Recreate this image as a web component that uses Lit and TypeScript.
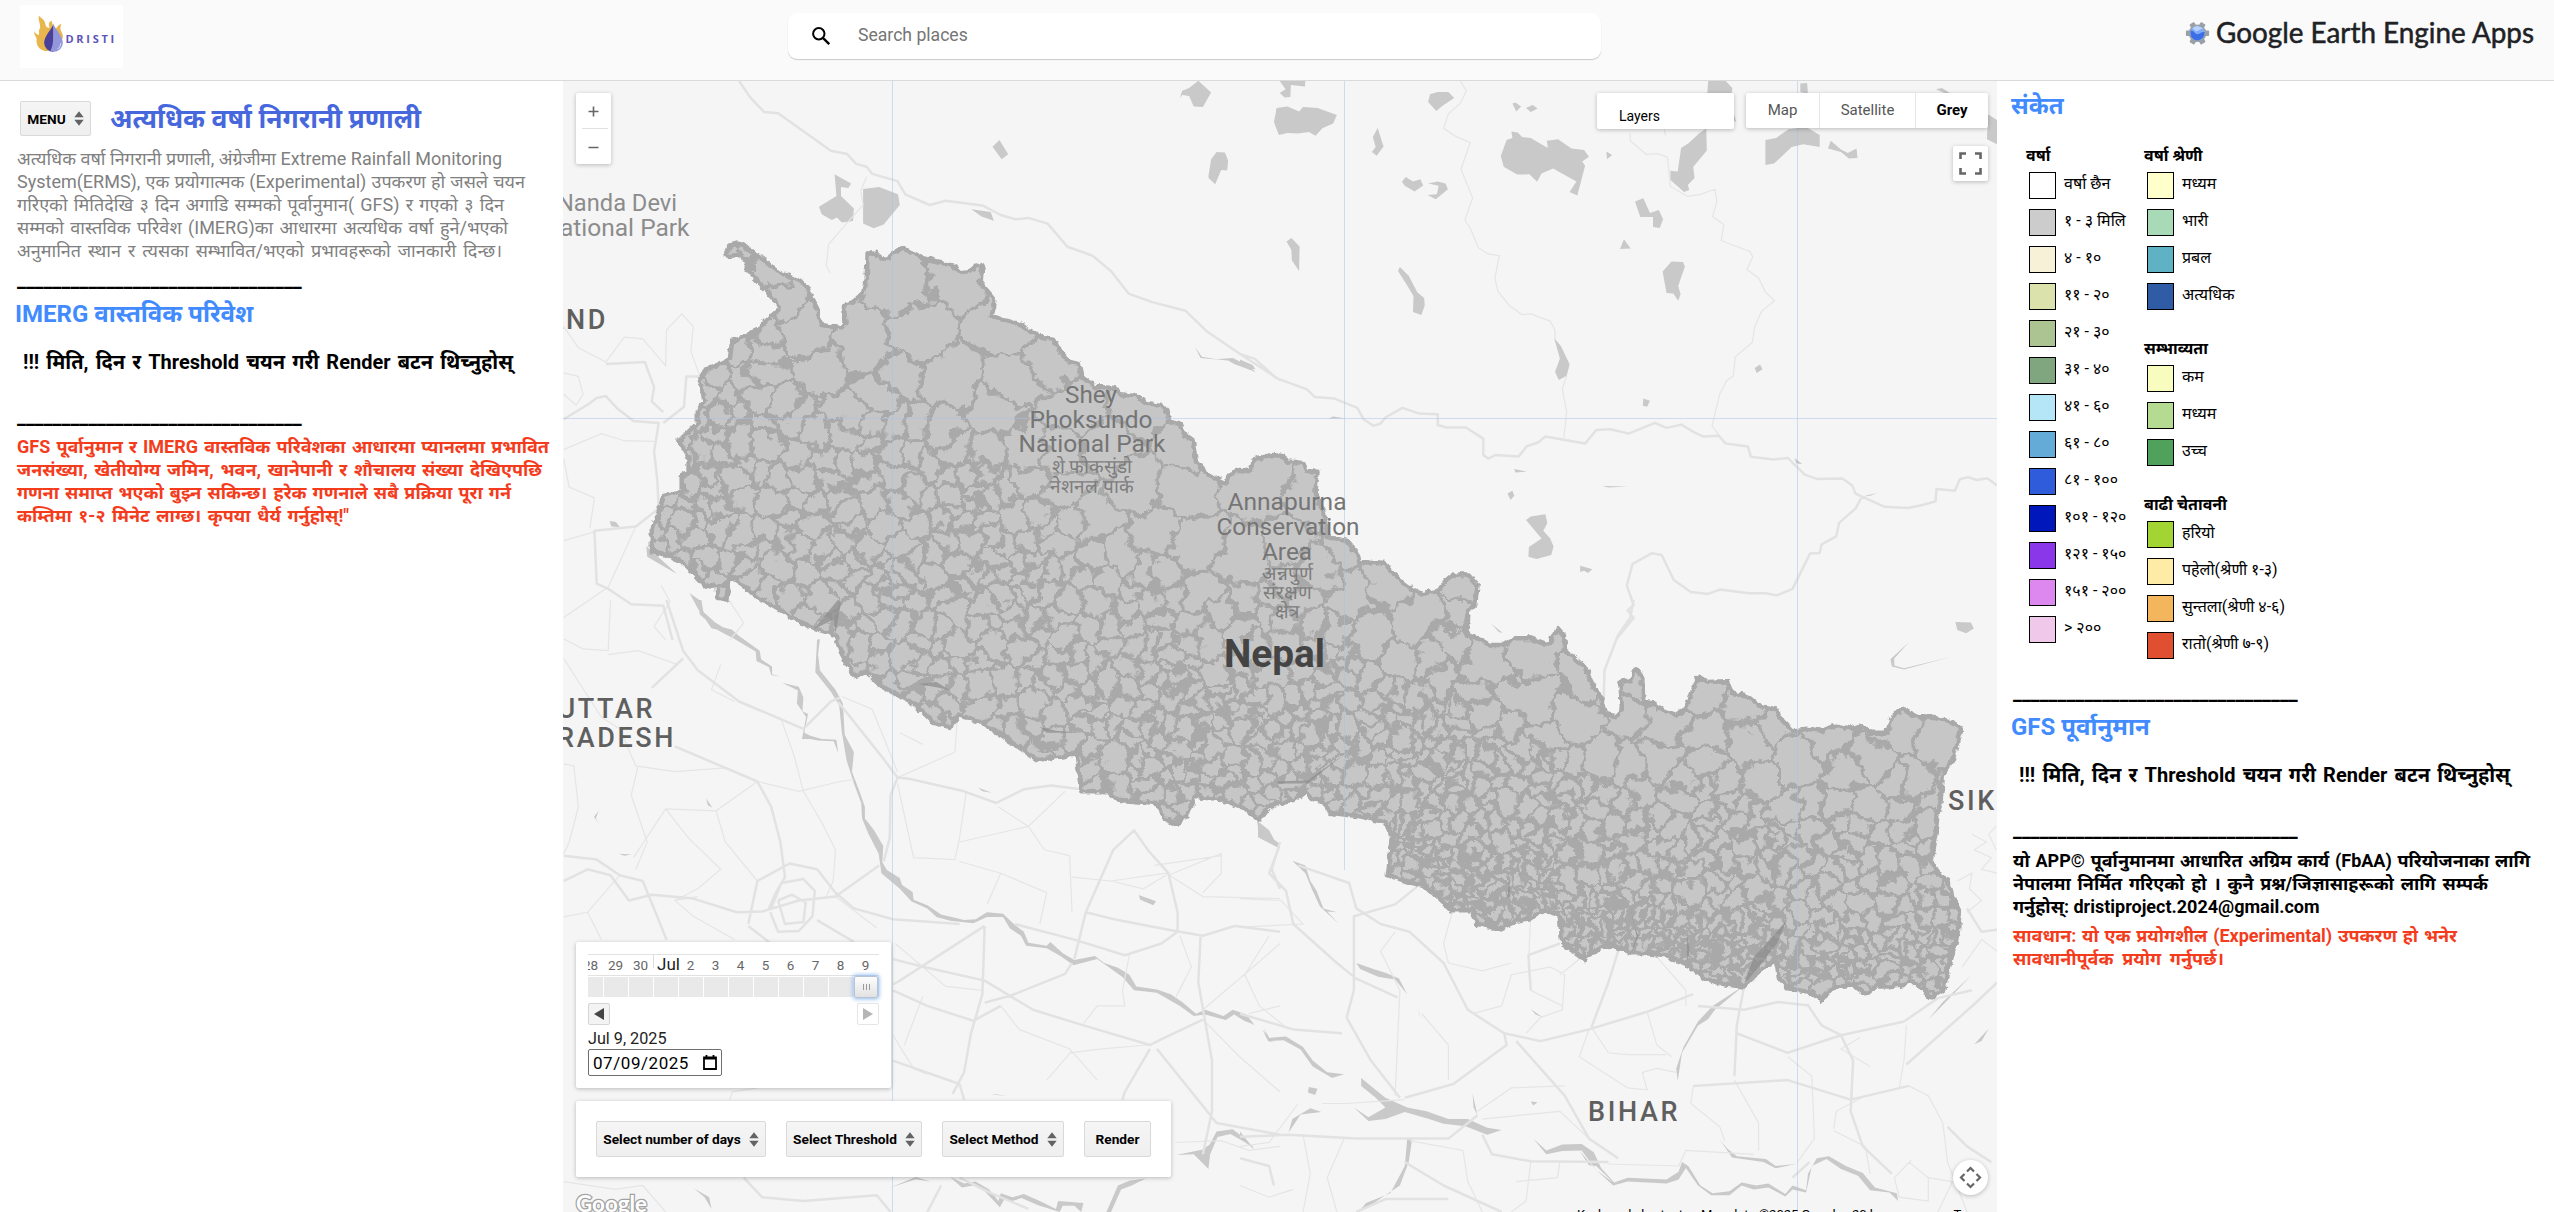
import { LitElement, html, svg, css } from "lit";
import { customElement, property } from "lit/decorators.js";

type Pt = [number, number];

/* Survey sheets: each one has an origin and a scale into map units. */
const SHEETS: Record<string, [number, number, number, number]> = {
  nw: [560, 80, 2.1778, 2.8],
  ne: [1240, 80, 2.0632, 2.8],
  sw: [560, 600, 2.1778, 2.562],
  se: [1240, 600, 2.0632, 2.562],
};

function pts(sheet: string, s: string): Pt[] {
  const [ox, oy, sx, sy] = SHEETS[sheet];
  return s
    .trim()
    .split(/\s+/)
    .map((p) => {
      const [x, y] = p.split(",").map(Number);
      return [ox + x / sx, oy + y / sy] as Pt;
    });
}

const toPath = (p: Pt[], close = false) =>
  "M" + p.map(([x, y]) => `${x.toFixed(1)},${y.toFixed(1)}`).join("L") + (close ? "Z" : "");

const BORDER: Pt[] = [
  ...pts("nw", `360,485 370,464 385,458 398,462 415,480 430,490 445,505 460,522 480,540 500,550 525,565 540,585 548,610 560,640 568,685 595,692 612,695 622,680 618,630 640,620 660,595 668,560 670,485 690,487 700,500 715,500 722,485 748,472 770,485 790,498 830,510 850,520 862,525 875,540 900,530 905,517 920,525 915,570 935,600 948,620 940,660 965,672 1000,685 1050,720 1075,725 1090,760 1110,790 1130,795 1135,830 1165,860 1210,862 1220,880 1250,885 1280,905 1310,910 1325,935 1325,955 1350,965 1365,1000 1378,1010 1385,1070 1410,1105 1450,1130 1458,1105 1475,1095 1500,1095`),
  ...pts("ne", `30,1062 65,1050 85,1052 100,1068 130,1072 138,1095 160,1098 155,1160 170,1200 178,1240 180,1280 220,1290 238,1320 248,1350 300,1355 325,1395 350,1420 375,1440 410,1430 425,1400 440,1385 470,1385 490,1415 485,1470 470,1490 465,1540`),
  ...pts("se", `470,90 490,97 515,115 545,115 565,98 600,98 628,112 640,110 655,72 668,90 672,130 710,170 725,210 745,250 752,290 775,298 788,280 785,210 805,205 817,175 830,200 832,260 855,265 870,280 900,295 920,280 930,240 945,200 965,210 1005,208 1015,240 1050,248 1075,272 1105,280 1120,310 1140,335 1170,330 1200,335 1230,322 1260,330 1280,320 1300,340 1335,340 1345,300 1365,280 1400,300 1430,302 1465,310 1488,330 1482,360 1470,410 1450,450 1445,520 1440,540 1435,600 1425,665 1440,700 1460,720 1470,760 1485,800 1480,860 1465,930 1450,1000 1425,1020 1405,995 1385,975 1365,985 1340,990 1310,990 1290,1010 1265,985 1240,990 1215,1000 1200,1025 1180,1005 1130,995 1112,970 1105,920 1085,940 1060,965 1040,990 1000,985 960,970 930,940 910,930 880,910 840,905 810,905 770,885 745,890 710,920 690,900 665,880 660,810 630,795 600,815 575,820 535,842 490,830 480,795 435,795 410,765 380,730 355,725 305,705 310,660 315,610 300,570 250,555 185,545 170,515 150,510 135,490 110,515 80,520 60,530 40,562`),
  ...pts("sw", `1500,540 1440,510 1380,505 1370,545 1345,575 1320,565 1300,520 1215,512 1195,490 1135,490 1125,395 1040,410 990,370 960,345 910,310 870,295 850,325 815,315 770,265 730,240 700,220 670,185 640,195 610,130 600,90 535,65 500,40 450,5`),
  ...pts("nw", `430,1450 400,1415 370,1390 362,1455 345,1450 340,1420 315,1415 290,1380 260,1345 220,1325 200,1320 200,1260 215,1210 225,1165 265,1150 265,1110 280,1100 280,1060 260,1010 300,960 300,925 315,900 305,840 320,810 370,780 375,730 395,722 435,700 445,680 478,640 455,595 410,535 395,490 370,492`),
];

function makeRandom(seed: number) {
  return () => {
    seed = (seed * 1664525 + 1013904223) >>> 0;
    return seed / 4294967296;
  };
}

/* Top and bottom of the country at a longitude. */
function span(x: number): Pt | null {
  let lo = Infinity;
  let hi = -Infinity;
  for (let i = 0; i < BORDER.length; i++) {
    const a = BORDER[i];
    const b = BORDER[(i + 1) % BORDER.length];
    if (a[0] <= x !== b[0] <= x) {
      const y = a[1] + ((x - a[0]) / (b[0] - a[0])) * (b[1] - a[1]);
      lo = Math.min(lo, y);
      hi = Math.max(hi, y);
    }
  }
  return hi > lo ? [lo, hi] : null;
}

/* Municipalities are large in the Himalaya and small in the Terai. */
function cellSize(x: number, y: number, lo: number, hi: number): number {
  const t = (y - lo) / (hi - lo);
  const d = y - lo;
  if (x > 1380 && hi - y < 62) return x > 1780 ? 10.5 : 8;
  if (x < 1330) {
    if (d < 75 && x > 780) return 60;
    if (t < 0.34) return x > 780 ? 40 : 24;
    if (t < 0.5) return 21;
    if (x > 1130 && t > 0.62) return 14;
    return 18.5;
  }
  if (d < 65) return 42;
  if (d < 100) return 26;
  return x < 1560 ? 14 : 17.5;
}

function municipalities(): string {
  const rnd = makeRandom(77);
  const seeds: { x: number; y: number; r: number }[] = [];
  for (let i = 0; i < 22000; i++) {
    const x = 640 + rnd() * 1330;
    const s = span(x);
    if (!s) continue;
    const y = s[0] + rnd() * (s[1] - s[0]);
    const r = cellSize(x, y, s[0], s[1]) * (0.62 + 0.8 * rnd());
    let ok = true;
    for (const o of seeds) {
      const q = Math.max(r * 0.9, o.r * 0.85);
      if ((o.x - x) ** 2 + (o.y - y) ** 2 < q * q) {
        ok = false;
        break;
      }
    }
    if (ok) seeds.push({ x, y, r });
  }
  let d = "";
  for (const a of seeds) {
    const reach = 95;
    let poly: Pt[] = [[a.x - reach, a.y - reach], [a.x + reach, a.y - reach], [a.x + reach, a.y + reach], [a.x - reach, a.y + reach]];
    for (const b of seeds) {
      if (a === b || Math.abs(a.x - b.x) > 190 || Math.abs(a.y - b.y) > 190) continue;
      const nx = b.x - a.x;
      const ny = b.y - a.y;
      const c = (b.x ** 2 + b.y ** 2 - a.x ** 2 - a.y ** 2) / 2;
      const side = (p: Pt) => p[0] * nx + p[1] * ny - c;
      const next: Pt[] = [];
      for (let i = 0; i < poly.length; i++) {
        const p = poly[i];
        const q = poly[(i + 1) % poly.length];
        const sp = side(p);
        const sq = side(q);
        if (sp <= 0) next.push(p);
        if (sp <= 0 !== sq <= 0) {
          const k = sp / (sp - sq);
          next.push([p[0] + (q[0] - p[0]) * k, p[1] + (q[1] - p[1]) * k]);
        }
      }
      poly = next;
      if (!poly.length) break;
    }
    if (poly.length > 2) d += toPath(poly, true);
  }
  return d;
}

const BORDER_PATH = toPath(BORDER, true);
const CELLS_PATH = municipalities();

const join = (list: [string, string][], close = false) => list.map(([s, p]) => toPath(pts(s, p), close)).join("");

const WATER = join(
  [
    ["nw", "1350,50 1355,30 1370,22 1390,2 1418,35 1400,76 1380,74 1370,45 1355,42"],
    ["nw", "1560,80 1568,80 1568,150 1556,120"],
    ["nw", "942,187 957,168 976,208 962,222"],
    ["nw", "1412,270 1418,222 1430,202 1448,203 1455,225 1453,253 1440,252 1427,292 1413,275"],
    ["nw", "598,264 634,290 628,302 612,300 612,325 640,360 638,395 614,399 603,385 592,392 570,376 564,355 602,325"],
    ["nw", "660,305 695,300 736,320 740,350 705,405 683,415 660,402"],
    ["nw", "896,362 938,370 945,394 918,382"],
    ["nw", "1383,748 1398,775 1430,782 1465,778 1500,800 1515,818 1468,795 1455,785 1395,778"],
    ["nw", "188,1305 255,1383 230,1365 190,1335"],
    ["nw", "108,1235 122,1238 130,1252 112,1250"],
    ["nw", "282,1436 302,1455 315,1495 350,1532 352,1542 330,1535 300,1480"],
    ["nw", "368,1538 400,1568 385,1568"],
    ["ne", "82,3 135,3 134,18 105,14 104,48 92,49 82,36 94,26"],
    ["ne", "76,78 98,74 122,88 130,76 160,78 200,98 192,122 170,135 156,156 142,146 120,150 98,148 80,154 70,118"],
    ["ne", "388,62 392,40 408,34 430,34 442,50 418,72 405,87"],
    ["ne", "562,66 568,63 580,74 570,88"],
    ["ne", "590,78 604,70 614,80 600,90"],
    ["ne", "274,160 284,134 296,186 282,212 272,202 280,188"],
    ["ne", "96,452 106,442 123,466 122,535 107,505 106,476"],
    ["ne", "334,285 342,272 357,284 372,278 378,295 360,312 340,296"],
    ["ne", "388,290 408,284 424,290 429,306 404,334 387,322 406,320 410,296"],
    ["ne", "326,535 330,524 348,548 366,595 380,610 381,632 374,658 357,650 358,605 345,575"],
    ["ne", "560,144 573,147 582,160 600,162 635,190 633,170 656,166 684,192 710,196 720,215 706,228 712,240 696,323 680,314 694,284 646,248 622,262 613,285 597,264 572,265 544,243 538,213 550,168 562,162"],
    ["ne", "756,200 768,210 757,222"],
    ["ne", "966,3 1002,3 1016,22 1012,60 1024,118 1000,100 964,40"],
    ["ne", "926,176 948,148 962,136 963,197 935,244 938,274 924,294 927,308 916,314 888,280 888,254 903,256 910,190"],
    ["ne", "815,340 832,331 846,372 864,364 873,390 866,414 852,412 852,384 826,384"],
    ["ne", "792,446 806,472 784,473"],
    ["ne", "890,508 914,510 918,522 904,577 909,600 904,618 894,598 880,596 872,536"],
    ["ne", "1156,10 1170,8 1172,40 1156,34"],
    ["ne", "1436,26 1448,22 1465,36 1455,38"],
    ["ne", "1084,168 1106,162 1132,138 1168,132 1196,154 1196,188 1162,180 1138,188 1102,234 1084,238"],
    ["ne", "1213,192 1219,170 1240,195 1254,204 1272,192 1274,218 1256,220 1240,202"],
    ["ne", "1543,96 1562,112 1562,180 1541,166"],
    ["ne", "648,722 662,745 680,796 674,828 658,840 650,818 660,780"],
    ["ne", "832,892 846,898 840,915 831,912"],
    ["ne", "1062,806 1073,797 1078,810 1066,820"],
    ["ne", "182,948 192,942 216,947"],
    ["ne", "566,1089 592,1097 568,1099"],
    ["ne", "552,1158 562,1150 566,1164 558,1176"],
    ["ne", "748,1137 800,1138 760,1141"],
    ["ne", "590,1232 600,1222 630,1216 634,1240 626,1262 640,1284 647,1306 642,1330 612,1341 595,1335 596,1308 622,1284"],
    ["ne", "702,1360 727,1370 718,1380 710,1374 702,1378"],
    ["ne", "1144,1058 1160,1075 1148,1074"],
    ["ne", "1284,1166 1315,1156 1300,1164"],
    ["ne", "1476,1518 1508,1519 1514,1536 1498,1549 1480,1540"],
    ["ne", "0,783 26,798 32,810 12,806 0,800"],
    ["ne", "518,1522 542,1548 534,1546"],
    ["se", "1342,152 1380,108 1350,150 1350,168 1370,175 1470,145 1370,178 1345,170"],
    ["sw", "298,0 308,0 312,30 338,58 355,70 375,76 390,92 435,130 438,152 462,170 462,190 480,196 460,192 455,172 428,156 426,132 380,100 345,78 305,38"],
    ["sw", "484,212 520,222 530,250 528,285 540,292 532,340 545,348 570,356 602,358 606,392 596,362 562,360 545,356 527,356 536,300 516,265 518,232"],
    ["sw", "560,102 566,100 562,140 566,180 600,230 616,265 620,345 640,390 636,440 652,490 664,530 664,560 684,590 704,630 702,672 712,692 740,712 745,730 768,748 770,768 800,782 830,806 880,820 905,818 930,800 965,804 990,832 1010,850 1020,878 1060,886 1068,876 1095,905 1120,922 1165,912 1185,930 1215,942 1240,960 1255,990 1300,998 1330,1010 1355,1030 1385,1060 1405,1050 1445,1066 1465,1050 1495,1062 1512,1088 1490,1078 1468,1062 1450,1076 1405,1062 1380,1066 1350,1040 1300,1006 1250,1000 1225,966 1170,920 1118,936 1090,912 1060,892 1015,886 1004,860 980,842 965,812 930,812 900,828 850,822 820,812 800,790 765,772 740,740 700,700 694,650 672,600 658,560 656,520 640,470 624,410 614,340 608,270 590,235 556,185"],
    ["sw", "910,480 940,494 920,490"],
    ["sw", "318,508 332,532 322,526"],
    ["sw", "84,540 78,560 86,575 74,556"],
    ["sw", "128,650 156,652 140,655"],
    ["sw", "1260,756 1298,772 1292,782 1264,768"],
    ["sw", "1520,560 1528,590 1568,625 1568,635 1520,608"],
    ["sw", "938,1265 975,1270 950,1268"],
    ["sw", "1532,1095 1545,1122 1568,1128 1545,1132"],
    ["sw", "1342,1422 1400,1408 1415,1395 1430,1362 1465,1356 1490,1378 1510,1402 1485,1385 1460,1368 1432,1376 1416,1420 1412,1458 1380,1420"],
    ["sw", "850,1478 880,1495 905,1490 935,1510 955,1540 960,1520 985,1530 1010,1522 1045,1540 1080,1560 1085,1540 1140,1545 1135,1568 1120,1552 1095,1552 1088,1568 1040,1550 1005,1532 985,1540 968,1535 958,1556 925,1515 900,1500 875,1505"],
    ["sw", "1190,1568 1215,1500 1240,1488 1275,1482 1245,1500 1222,1510 1200,1568"],
    ["sw", "718,1506 775,1478 806,1490 775,1484"],
    ["sw", "292,1508 325,1530 330,1560 315,1530"],
    ["se", "35,565 60,590 80,635 40,610"],
    ["se", "108,668 135,680 145,720 158,745 172,790 200,800 180,798 204,830 165,785 148,740 135,700"],
    ["se", "240,930 275,945 300,955 328,970 345,1010 320,972 285,965 248,945"],
    ["se", "0,1056 28,1088 0,1070"],
    ["se", "46,1100 60,1122 95,1118 130,1145 150,1180 180,1210 215,1215 190,1225 150,1195 125,1152 90,1128 58,1130"],
    ["se", "250,1225 275,1250 300,1275 345,1300 385,1310 430,1330 470,1330 510,1352 540,1358 510,1370 465,1348 420,1342 390,1330 340,1312 300,1330 265,1335 235,1300 265,1325 300,1300 280,1275 250,1245"],
    ["se", "605,1380 632,1410 665,1395 705,1394 730,1415 745,1455 772,1492 800,1480 880,1485 905,1465 912,1440 925,1450 950,1500 975,1520 1010,1515 1035,1492 1065,1500 1090,1495 1125,1522 1140,1500 1168,1512 1172,1470 1190,1430 1215,1425 1250,1450 1285,1468 1310,1505 1355,1520 1358,1540 1340,1518 1300,1512 1275,1475 1240,1458 1210,1432 1180,1450 1168,1518 1140,1510 1125,1528 1090,1505 1060,1510 1035,1500 1010,1525 972,1525 945,1500 920,1455 905,1485 880,1495 800,1490 770,1500 735,1460 705,1410 665,1412 632,1420"],
    ["se", "700,1410 735,1460 770,1492 735,1450 720,1448"],
    ["se", "990,1382 1005,1405 1025,1425 1085,1432 1105,1450 1148,1445 1105,1456 1080,1440 1015,1428"],
    ["se", "345,1380 355,1382 348,1440 330,1500 270,1550 245,1568 260,1545 310,1520 340,1450"],
    ["se", "1040,988 975,1040 945,1080 915,1145 900,1200 903,1232 912,1160 945,1090 965,1075 980,1050"],
    ["se", "100,1365 108,1330 145,1302 168,1312 125,1318"],
    ["se", "142,1248 160,1252 155,1268 140,1262"],
    ["se", "600,1285 614,1287 605,1295"],
    ["se", "600,1048 625,1070 610,1062"],
    ["se", "1420,1075 1450,1030 1510,960 1452,1035"],
    ["se", "1515,1138 1545,1098 1530,1130"],
    ["se", "0,1362 30,1408 0,1380"],
    ["se", "368,1045 373,1075 370,1060"],
    ["se", "480,1265 490,1320 482,1300"],
  ],
  true,
);

const INLAND_WATER = join(
  [
    ["sw", "552,75 605,0 612,8 600,85 596,50"],
    ["sw", "780,215 820,210 850,232 825,225"],
    ["sw", "1045,325 1080,335 1140,340 1060,340"],
    ["se", "75,465 140,462 215,395 175,435 140,470 80,470"],
    ["se", "1040,985 1060,915 1100,860 1128,820 1108,880 1070,940"],
    ["se", "805,780 812,830 822,860 808,905 818,862"],
    ["se", "555,712 558,760 552,765"],
    ["se", "922,855 928,900 922,925"],
  ],
  true,
);

const MAJOR_ROADS = join([
  ["nw", "390,3 415,50 445,90 475,93 590,198 625,207 645,235 668,243 680,263 735,283 752,320 805,350 840,338 920,351 960,378 992,390 1020,386 1062,402 1105,467 1160,492 1200,535 1238,598 1290,622 1362,646 1410,705 1490,775 1568,840"],
  ["ne", "0,768 30,780 75,835 138,866 155,888 195,892 242,918 255,950 275,968 290,962 300,945 335,918 370,934 408,936 408,966 425,973 466,973 502,1004 502,1050 512,1060 527,1050 575,1054 592,1025 615,1015 630,998 712,1018 735,980 765,978 802,990 856,960 880,974 911,965 935,985 955,998 988,996 1002,1018 1048,1026 1054,1055 1100,1063 1130,1058 1165,1105 1190,1117 1243,1116 1263,1135 1270,1158 1330,1195 1378,1198 1408,1190 1435,1180 1437,1145 1475,1150 1485,1118 1502,1112 1520,1120 1542,1115 1562,1135"],
  ["ne", "775,1568 812,1506 800,1485 812,1470 798,1415 810,1355 850,1325 870,1330 895,1400 930,1434 966,1439 990,1427 1050,1437 1085,1437 1107,1443 1140,1425 1176,1326 1196,1324 1200,1300 1230,1278 1236,1240 1270,1200 1284,1165"],
  ["se", "812,0 805,45 780,90 752,180 750,270"],
  ["nw", "8,950 65,905 80,890 100,885 125,920 160,955 215,960 205,1040 212,1120 215,1200 165,1250 75,1262 80,1410 105,1425 155,1468 225,1472 245,1568"],
  ["nw", "100,795 185,790 205,860 200,900 225,930"],
  ["nw", "225,960 270,915 275,830 305,830"],
  ["sw", "232,0 268,130 300,180 390,260 530,330 590,260 610,250"],
  ["sw", "268,150 200,225"],
  ["sw", "8,720 60,690 110,705 150,770 200,755 290,765 385,800 440,798 520,770 600,760 695,680"],
  ["sw", "8,655 80,665 130,705 180,720 215,820 232,870"],
  ["sw", "250,375 350,425 430,465 460,530 480,620 490,710 470,750 455,790"],
  ["sw", "410,830 430,720 500,675 560,690 600,750 640,790 725,818 870,830"],
  ["sw", "460,790 482,725 530,715 555,745 550,810 520,848 475,850 458,800"],
  ["sw", "475,770 505,755 535,775 530,825 490,830 475,770"],
  ["sw", "410,835 470,890"],
  ["sw", "560,820 640,876"],
  ["sw", "735,455 720,500 718,610 705,670"],
  ["sw", "735,455 760,458 880,490 950,520 1010,485 1070,475 1135,485"],
  ["sw", "605,260 700,400 735,455"],
  ["sw", "925,835 740,975 725,985"],
  ["sw", "925,835 920,1010 895,1110 880,1210 855,1265"],
  ["sw", "925,1032 985,1012 1100,958 1115,930"],
  ["sw", "725,1000 800,1040 900,1078 960,1040"],
  ["sw", "725,920 800,942 925,975 1030,1050 1140,1090 1285,1140 1310,1125 1400,1075"],
  ["sw", "990,830 1120,870 1230,910 1310,880 1345,850"],
  ["sw", "1145,800 1215,820 1325,845 1400,860 1470,835 1568,850"],
  ["sw", "1145,800 1120,920"],
  ["sw", "1145,800 1205,640 1250,590 1280,640 1325,700 1345,800 1345,850"],
  ["sw", "1395,860 1390,980 1420,1180 1420,1310 1400,1420"],
  ["sw", "1285,1150 1230,1260 1225,1280"],
  ["sw", "1300,1150 1430,1340 1568,1370"],
  ["sw", "725,1180 870,1240 880,1280"],
  ["sw", "830,1500 800,1568"],
  ["sw", "400,1480 440,1530 530,1540 690,1525 720,1568"],
  ["sw", "870,1480 940,1520 1020,1560"],
  ["sw", "1568,620 1550,690 1568,740"],
  ["se", "80,635 60,700 95,745 110,830 200,930 240,970 325,1018"],
  ["se", "120,680 225,725 240,790 290,830 350,850 420,930 470,1050 545,1110 550,1140 440,1240 340,1275"],
  ["se", "220,1070 270,1180 330,1275"],
  ["se", "220,1070 235,1000 235,810 320,780 370,730"],
  ["se", "0,1060 110,1100 210,1110"],
  ["se", "570,1130 670,1270 720,1380 780,1430"],
  ["se", "545,1110 620,1130 720,1100 840,1055 935,1010"],
  ["se", "600,1000 595,910 660,880"],
  ["se", "945,1040 1040,1050 1110,1030 1170,1038"],
  ["se", "1025,1110 1130,1160 1240,1115 1370,1080"],
  ["se", "935,1245 1130,1230 1260,1280 1380,1245"],
  ["se", "1020,1220 1025,1090 1040,990"],
  ["se", "1240,1115 1265,1180 1260,1310 1285,1400 1345,1470"],
  ["se", "725,1095 760,980 780,900"],
  ["se", "1170,1035 1200,1090 1240,1115"],
  ["se", "1370,1080 1440,1020 1510,1000"],
  ["se", "1375,1190 1520,1030 1562,980"],
  ["se", "0,1375 100,1370 240,1380 430,1380 490,1320"],
  ["se", "500,1370 520,1420 600,1438 760,1440"],
  ["se", "340,1440 420,1500 540,1568"],
  ["se", "0,1430 60,1450 70,1500"],
  ["se", "1175,1440 1140,1480"],
  ["se", "240,1568 300,1535 430,1535"],
  ["se", "1460,1350 1500,1400 1550,1440"],
  ["se", "1500,790 1530,850 1562,845"],
]);

const MINOR_ROADS = join([
  ["nw", "668,270 655,310 660,350 625,400 585,460 580,520 588,540"],
  ["nw", "8,690 40,750 100,790 140,720 180,725 230,800 232,700 265,655 290,690 285,760 305,830"],
  ["nw", "8,820 40,830 50,880 35,910 8,880"],
  ["nw", "8,1035 90,990 140,1010 205,1012"],
  ["nw", "8,1060 20,1140 75,1170 65,1255"],
  ["nw", "8,1290 75,1265"],
  ["nw", "165,1250 130,1350 105,1420 8,1505"],
  ["nw", "220,1415 240,1460 205,1530 230,1568"],
  ["nw", "370,1568 400,1520 365,1450"],
  ["ne", "455,3 467,30 455,65 430,95 420,135 445,158 475,175 466,210 456,250 480,330 464,392 475,415 492,470 512,487 535,492 526,555 532,592 556,632 582,657 600,655 640,675 650,700 650,725"],
  ["ne", "674,828 665,865 674,930 668,1002"],
  ["ne", "805,150 805,170 838,208 862,206 882,216 888,298 924,326 950,320 980,306 984,340 975,382 998,405 993,450 1052,480 1058,495 1046,530 1070,555 1084,594 1103,618 1076,648 1062,690 1057,735 1022,775 1018,828 1004,842 990,878 974,968 990,998"],
  ["ne", "875,138 878,156"],
  ["sw", "8,100 50,125 105,130 110,0"],
  ["sw", "8,150 90,300 130,330 165,425 250,440 360,430"],
  ["sw", "105,140 170,130 255,165"],
  ["sw", "8,420 30,425 40,530 20,620 8,650"],
  ["sw", "170,425 155,500 190,620 165,690"],
  ["sw", "430,465 340,540 230,535 160,660"],
  ["sw", "230,535 280,610 350,690 300,740 250,770"],
  ["sw", "340,540 360,620 430,720"],
  ["sw", "430,465 520,490 610,465 640,460"],
  ["sw", "480,300 510,400 530,490 570,570 600,640 595,720 580,760"],
  ["sw", "350,165 330,230 380,260"],
  ["sw", "615,248 680,280 735,440"],
  ["sw", "740,340 790,370"],
  ["sw", "735,455 860,390 865,310"],
  ["sw", "735,470 770,660 860,665 870,610 885,490"],
  ["sw", "870,620 1020,580 1100,490"],
  ["sw", "955,530 1020,580 1055,640 1110,655 1115,800"],
  ["sw", "870,670 960,700 1060,750 1045,830"],
  ["sw", "930,780 960,700"],
  ["sw", "1115,710 1200,720 1320,700 1400,760 1568,765"],
  ["sw", "1200,720 1270,740 1320,705"],
  ["sw", "1325,705 1440,650 1440,700 1400,750"],
  ["sw", "1295,680 1440,655"],
  ["sw", "300,760 250,770 290,810 380,870"],
  ["sw", "8,812 60,800 130,705"],
  ["sw", "60,800 90,870"],
  ["sw", "690,840 600,760"],
  ["sw", "730,880 840,990 920,1000"],
  ["sw", "750,1140 790,1015"],
  ["sw", "725,1115 770,1200 800,1215"],
  ["sw", "960,1040 1000,1100 1110,1150 1170,1230"],
  ["sw", "1115,1155 1060,1230"],
  ["sw", "1280,1140 1180,1150 1110,1160"],
  ["sw", "1240,910 1225,1000 1230,1040 1170,1040 1140,1085"],
  ["sw", "1350,860 1375,940 1340,1020"],
  ["sw", "1568,880 1500,950 1400,1050"],
  ["sw", "1400,1075 1480,1170 1568,1260"],
  ["sw", "1568,1040 1500,1060"],
  ["sw", "1340,1390 1440,1385 1500,1410 1568,1400"],
  ["sw", "8,1490 120,1510 180,1500 230,1568"],
  ["sw", "370,1280 375,1260 430,1250"],
  ["se", "0,765 85,770 130,830 0,838"],
  ["se", "60,860 10,960 40,1040 100,1100"],
  ["se", "120,1290 60,1390 0,1400"],
  ["se", "170,1290 220,1290 340,1280"],
  ["se", "320,850 290,900 330,1000 320,1270"],
  ["se", "440,790 420,880 430,930 500,950 560,930"],
  ["se", "600,800 595,940 600,1000 665,1040"],
  ["se", "375,1060 430,1140 430,1230"],
  ["se", "480,1060 540,1040 560,960 640,940 670,960 665,1050 620,1070 590,1110"],
  ["se", "660,960 720,900"],
  ["se", "720,1100 700,1170 800,1250 840,1255 830,1210 860,1200 900,1210"],
  ["se", "725,1095 760,1160 800,1165 880,1165"],
  ["se", "840,1055 860,1140 890,1170"],
  ["se", "850,900 920,1000 920,1040"],
  ["se", "500,1330 660,1310 720,1380"],
  ["se", "490,1310 560,1250 670,1245"],
  ["se", "350,1385 460,1410 470,1490 500,1568"],
  ["se", "600,1440 590,1540 560,1568"],
  ["se", "660,1440 655,1480 570,1490"],
  ["se", "760,1445 905,1450 920,1410 1060,1420"],
  ["se", "935,1245 930,1290 990,1350 1000,1385"],
  ["se", "1020,1230 1070,1340 1070,1410"],
  ["se", "1130,1170 1180,1220 1185,1380 1150,1440"],
  ["se", "1225,1355 1230,1310 1290,1270"],
  ["se", "1225,1360 1290,1400 1300,1470"],
  ["se", "1360,1250 1370,1180 1375,1090"],
  ["se", "1300,1195 1240,1150 1280,1120"],
  ["se", "1380,1245 1420,1270 1450,1340 1460,1440 1500,1568"],
  ["se", "1380,1440 1420,1480 1420,1540 1360,1530 1350,1480 1385,1435"],
  ["se", "1420,1480 1470,1490 1440,1568"],
  ["se", "130,1370 145,1470 130,1568"],
  ["se", "0,1500 60,1530 110,1510"],
  ["se", "215,1380 180,1480 200,1568"],
  ["se", "1510,600 1540,620 1515,640 1550,660 1530,690 1562,700"],
  ["se", "1480,720 1510,700 1505,740 1530,770 1500,800"],
  ["se", "1560,580 1545,600 1560,640"],
  ["se", "1490,940 1530,870 1562,900"],
]);

@customElement("tick-arrows")
class TickArrows extends LitElement {
  static styles = css`:host { display: block; width: 10px; height: 15px; } svg { display: block; }`;
  render() {
    return html`<svg width="10" height="15" viewBox="0 0 10 15"><path d="M5 .3 9.700 6.200H.3zM5 14.700.3 8.800h9.400z" fill="#636363" /></svg>`;
  }
}

@customElement("gee-button")
class GeeButton extends LitElement {
  @property() label = "";
  @property({ type: Boolean }) select = false;
  static styles = css`
    :host { display: block; }
    .btn { box-sizing: border-box; width: 100%; height: 100%; display: flex; align-items: center; justify-content: center;
      gap: 8px; padding: 0; border: 1px solid #d9d9d9; border-radius: 2px;
      background: linear-gradient(#f5f5f5, #efefef); font: 700 13.7px Roboto, sans-serif; color: #000; white-space: nowrap; }
  `;
  render() {
    return html`<button class="btn"><span>${this.label}</span>${this.select ? html`<tick-arrows></tick-arrows>` : ""}</button>`;
  }
}

@customElement("nepal-map")
class NepalMap extends LitElement {
  static styles = css`
    :host { display: block; width: 100%; height: 100%; }
    svg { display: block; }
    text { font-family: Roboto, sans-serif; }
    .park { font-size: 23px; fill: #8c8c8c; text-anchor: middle; }
    .inside { fill: #757575; }
    .parkhi { font-size: 19px; fill: #7d7d7d; text-anchor: middle; }
    .state { font-size: 27px; font-weight: 500; fill: #5f5f5f; letter-spacing: 2.6px; }
    .country { font-size: 38px; font-weight: 700; fill: #444; }
  `;
  render() {
    return html`<svg width="1434" height="1131" viewBox="563 81 1434 1131">
      <defs>
        <clipPath id="land"><path d=${BORDER_PATH} /></clipPath>
        <filter id="wiggle" filterUnits="userSpaceOnUse" x="563" y="81" width="1434" height="1131">
          <feTurbulence type="fractalNoise" baseFrequency="0.045" numOctaves="3" seed="5" />
          <feDisplacementMap in="SourceGraphic" scale="26" xChannelSelector="R" yChannelSelector="G" />
        </filter>
        <filter id="coast" filterUnits="userSpaceOnUse" x="563" y="81" width="1434" height="1131">
          <feTurbulence type="fractalNoise" baseFrequency="0.15" numOctaves="2" seed="2" />
          <feDisplacementMap in="SourceGraphic" scale="6" xChannelSelector="R" yChannelSelector="G" />
        </filter>
      </defs>
      <rect x="563" y="81" width="1434" height="1131" fill="#f5f5f5" />
      <path d=${WATER} fill="#c9c9c9" />
      <path d=${MINOR_ROADS} fill="none" stroke="#e5e5e5" stroke-width="1.2" />
      <path d=${MAJOR_ROADS} fill="none" stroke="#e2e2e2" stroke-width="2.5" stroke-linejoin="round" />
      <g filter="url(#coast)">
        <path d=${BORDER_PATH} fill="#c6c6c6" />
        <g clip-path="url(#land)">
          <path d=${CELLS_PATH} fill="none" stroke="#a9a9a9" stroke-width="4.700" stroke-linejoin="round" filter="url(#wiggle)" />
        </g>
        <path d=${BORDER_PATH} fill="none" stroke="#a9a9a9" stroke-width="4.500" stroke-linejoin="round" />
      </g>
      <path d=${INLAND_WATER} fill="#8d8d8d" fill-opacity=".75" />
      <path d="M892.5 81V1212M1344.5 81V870M1797.5 81V1212M563 418.5H1997" fill="none" stroke="#a9bfe8" stroke-opacity=".5" />
      <text class="park" x="617" y="211" textLength="120" lengthAdjust="spacingAndGlyphs">Nanda Devi</text>
      <text class="park" x="616" y="236" textLength="147" lengthAdjust="spacingAndGlyphs">National Park</text>
      <text class="park inside" x="1091" y="403" textLength="52" lengthAdjust="spacingAndGlyphs">Shey</text>
      <text class="park inside" x="1091" y="428" textLength="123" lengthAdjust="spacingAndGlyphs">Phoksundo</text>
      <text class="park inside" x="1092" y="452" textLength="147" lengthAdjust="spacingAndGlyphs">National Park</text>
      <text class="parkhi" x="1092" y="473">शे फोकसुंडो</text>
      <text class="parkhi" x="1092" y="493">नेशनल पार्क</text>
      <text class="park inside" x="1287" y="510" textLength="119" lengthAdjust="spacingAndGlyphs">Annapurna</text>
      <text class="park inside" x="1288" y="535" textLength="143" lengthAdjust="spacingAndGlyphs">Conservation</text>
      <text class="park inside" x="1287" y="560" textLength="50" lengthAdjust="spacingAndGlyphs">Area</text>
      <text class="parkhi" x="1287" y="580">अन्नपुर्ण</text>
      <text class="parkhi" x="1287" y="599">संरक्षण</text>
      <text class="parkhi" x="1287" y="618">क्षेत्र</text>
      <text class="state" x="608" y="329" text-anchor="end">UTTARAKHAND</text>
      <text class="state" x="655" y="718" text-anchor="end">UTTAR</text>
      <text class="state" x="676" y="747" text-anchor="end">PRADESH</text>
      <text class="state" x="1588" y="1121">BIHAR</text>
      <text class="state" x="1948" y="810">SIKKIM</text>
      <text class="country" x="1224" y="667" textLength="101" lengthAdjust="spacingAndGlyphs">Nepal</text>
    </svg>`;
  }
}

const RAIN: [string, string][] = [
  ["#ffffff", "वर्षा छैन"], ["#cccccc", "१ - ३ मिलि"], ["#f7f1d8", "४ - १०"], ["#dce2ab", "११ - २०"],
  ["#acc491", "२१ - ३०"], ["#80a680", "३१ - ४०"], ["#b5e6f7", "४१ - ६०"], ["#64abd8", "६१ - ८०"],
  ["#2f5cdb", "८१ - १००"], ["#0018bb", "१०१ - १२०"], ["#8a37ea", "१२१ - १५०"], ["#dd88ee", "१५१ - २००"],
  ["#f0c8ea", "> २००"],
];
const CLASSES: [string, string][] = [["#ffffcc", "मध्यम"], ["#a9dab7", "भारी"], ["#5fb2c4", "प्रबल"], ["#305ba5", "अत्यधिक"]];
const CHANCE: [string, string][] = [["#f8fcbf", "कम"], ["#b4db91", "मध्यम"], ["#50a15b", "उच्च"]];
const FLOOD: [string, string][] = [
  ["#a2d534", "हरियो"], ["#fdeba6", "पहेलो(श्रेणी १-३)"], ["#f4b65c", "सुन्तला(श्रेणी ४-६)"], ["#e05030", "रातो(श्रेणी ७-९)"],
];

@customElement("legend-group")
class LegendGroup extends LitElement {
  @property() heading = "";
  @property({ attribute: false }) items: [string, string][] = [];
  static styles = css`
    :host { display: flex; flex-direction: column; gap: 10px; font-family: Roboto, "Noto Sans", sans-serif; color: #000; }
    .head { font-size: 16px; line-height: 20px; font-weight: 700; margin-bottom: -4px; white-space: nowrap; }
    .row { display: flex; gap: 8px; height: 27px; padding-left: 3px; }
    .swatch { box-sizing: border-box; width: 27px; height: 27px; border: 1px solid #000; }
    .name { font-size: 16px; line-height: 24px; white-space: nowrap; }
  `;
  render() {
    return html`<div class="head">${this.heading}</div>
      ${this.items.map(([c, n]) => html`<div class="row"><div class="swatch" style="background:${c}"></div><div class="name">${n}</div></div>`)}`;
  }
}

/* A paragraph set line by line, each line filling its own measure. */
const lines = (rows: [number, string][]) => rows.map(([w, t]) => html`<div class="line" style="width:${w}px">${t}</div>`);

const PROMPT = "!!! मिति, दिन र Threshold चयन गरी Render बटन थिच्नुहोस्";

@customElement("app-root")
class AppRoot extends LitElement {
  static styles = css`
    :host { display: block; width: 2554px; height: 1212px; overflow: hidden; background: #fff; font-family: Roboto, "Noto Sans", sans-serif; color: #000; }
    * { box-sizing: border-box; }
    .header { height: 81px; background: #fafafa; border-bottom: 1px solid #dadada; display: grid; grid-template-columns: 788px 813px 1fr; }
    .logo { width: 103px; height: 63px; margin: 5px 0 0 20px; background: #fff; display: block; }
    .search { height: 46px; margin-top: 13px; background: #fff; border-radius: 9px; box-shadow: 0 1px 1px rgba(0,0,0,.2); display: flex; align-items: center; padding-left: 24px; gap: 28px; }
    .search span { font-size: 17.6px; color: #757575; padding-bottom: 3px; }
    .brand { justify-self: end; margin: 12px 15px 0 0; display: block; }
    .main { display: grid; grid-template-columns: 563px 1434px 557px; height: 1131px; }
    .left, .right { background: #fff; white-space: nowrap; }
    .left { padding: 20px 0 0 17px; }
    .right { padding: 11px 0 0 16px; }
    .top { display: flex; height: 36px; margin-left: 3px; gap: 19px; }
    .menu { width: 71px; height: 35px; }
    .title { font-size: 26.4px; line-height: 36px; margin-top: 0; font-weight: 700; color: #4768dc; }
    .line { text-align: justify; text-align-last: justify; }
    .intro { margin-top: 10px; font-size: 18px; line-height: 23px; color: #808080; }
    .rule { font-size: 20px; line-height: 26px; font-weight: 700; margin-top: 5px; height: 23px; }
    .section { font-size: 24px; line-height: 28px; font-weight: 700; color: #418bff; margin: 10px 0 0 -2px; }
    .prompt { font-size: 20px; line-height: 24px; font-weight: 700; margin: 22px 0 0 6px; }
    .r2 { margin-top: 30px; }
    .note { font-size: 18px; line-height: 23px; font-weight: 700; margin-top: 8px; }
    .red { color: #f43c1d; }
    .legend { display: flex; margin: 26px 0 0 13px; height: 513px; }
    .col1 { width: 118px; }
    .col2 { display: flex; flex-direction: column; gap: 29px; }
    .mapwrap { position: relative; overflow: hidden; }
    .card { position: absolute; background: #fff; border-radius: 2px; box-shadow: 0 1px 4px rgba(0,0,0,.25); }
    .zoom { left: 13px; top: 12px; width: 35px; height: 71px; }
    .layers { left: 1034px; top: 12px; width: 137px; height: 36px; font-size: 14px; line-height: 46px; padding-left: 22px; }
    .types { left: 1183px; top: 12px; width: 242px; height: 35px; display: grid; grid-template-columns: 73px 96px 73px; font-size: 15px; line-height: 35px; text-align: center; color: #565656; }
    .types div + div { border-left: 1px solid #e6e6e6; }
    .types .on { font-weight: 700; color: #000; }
    .full { left: 1390px; top: 65px; width: 35px; height: 35px; }
    .pan { left: 1390px; top: 1079px; width: 35px; height: 35px; border-radius: 50%; }
    .slider { left: 13px; top: 861px; width: 315px; height: 146px; padding: 12px; color: #222; }
    .days { display: flex; height: 22px; border-top: 1px solid #e2e2e2; border-bottom: 1px solid #e2e2e2; overflow: hidden; font-size: 13.5px; line-height: 21px; color: #666; }
    .days span { flex: none; width: 25px; text-align: center; }
    .days span:first-child { margin-left: -10px; }
    .days .month { font-size: 17px; line-height: 18px; color: #222; border-left: 1px solid #ddd; height: 13px; text-align: left; padding-left: 3px; }
    .track { position: relative; margin-top: 1px; height: 20px; background: repeating-linear-gradient(90deg, #e9e9e9 0 24px, #fff 24px 25px) -9px 0; }
    .knob { position: absolute; right: 1px; top: -1px; width: 24px; height: 22px; border: 1px solid #b8c4d4; border-radius: 2px; background: linear-gradient(#fdfdfd, #e2e2e2); box-shadow: 0 0 4px 1px #8bb6ee; display: flex; gap: 2px; align-items: center; justify-content: center; }
    .knob i { width: 1px; height: 6px; background: #9a9a9a; }
    .steps { display: flex; justify-content: space-between; margin-top: 6px; }
    .step { width: 22px; height: 22px; border: 1px solid #d5d5d5; border-radius: 2px; background: #f3f3f3; display: flex; align-items: center; justify-content: center; }
    .step.off { background: #fff; border-color: #e6e6e6; }
    .date { font-size: 16.2px; line-height: 20px; margin-top: 4px; }
    .input { width: 134px; height: 27px; border: 1px solid #6f6f6f; border-radius: 2px; display: flex; align-items: center; justify-content: space-between; padding: 0 4px; font-size: 17px; letter-spacing: .55px; color: #000; }
    .bar { left: 13px; top: 1020px; width: 595px; height: 76px; padding: 20px; display: flex; gap: 20px; }
    .bar gee-button { height: 36px; }
    .w1 { width: 170px; } .w2 { width: 136px; } .w3 { width: 122px; } .w4 { width: 67px; }
    .google { position: absolute; left: 10px; top: 1110px; display: block; }
    .credits { position: absolute; right: 7px; top: 1126px; display: flex; width: 413px; font-size: 13px; line-height: 15px; white-space: nowrap; }
    .credits span:nth-child(1) { width: 124px; }
    .credits span:nth-child(2) { width: 151px; }
    .credits span:nth-child(3) { flex: 1; }
  `;

  render() {
    const rule = "_".repeat(32);
    return html`
      <header class="header">
        <svg class="logo" viewBox="30 15 308 189">
          <path fill="#e8b64c" d="M86 47C83 60 91 70 90 84 84 90 88 100 86 105 80 104 74 99 72 93 70 106 82 112 79 122 79 140 92 153 112 153L150 140 158 112C160 100 149 94 151 82 153 76 150 74 155 71 143 73 138 86 134 92L124 62C112 68 117 76 118 84 106 84 106 72 104 66 102 58 92 54 86 47Z" />
          <path fill="#4a3f9a" d="M130 72C122 92 102 108 102 129A28 27 0 0 0 130 156Z" />
          <path fill="#9297dc" d="M130 72C138 92 158 108 158 129A28 27 0 0 1 130 156L121 152C133 130 128 100 130 72Z" />
          <path fill="none" stroke="#d9dbf6" stroke-width="3" stroke-linecap="round" d="M152 131Q151 142 143 147" />
          <text x="166" y="129" textLength="146" font-family="Open Sans, sans-serif" font-weight="700" font-size="33" fill="#5d55b8">DRISTI</text>
        </svg>
        <div class="search">
          <svg width="18" height="18" viewBox="0 0 18 18"><circle cx="6.8" cy="6.8" r="5.7" fill="none" stroke="#000" stroke-width="2" /><path d="M10.9 10.9 17.2 17.2" stroke="#000" stroke-width="2.3" /></svg>
          <span>Search places</span>
        </div>
        <svg class="brand" width="354" height="44" viewBox="2185 12 354 44">
          <g transform="translate(2197.5 33.3)">
            ${[30, 90, 150, 210, 270, 330].map((a) => svg`<rect x="-2.8" y="-11.6" width="5.6" height="6" rx="1" fill="#9aa0a6" transform="rotate(${a})" />`)}
            <circle r="8.8" fill="#9aa0a6" />
            <circle r="7.2" fill="#7fabf9" />
            <path d="M-7 -2C-4 -4-3 1 0 1S4-2 7-1A7.2 7.2 0 0 1-6.6 3Z" fill="#3c6fe6" />
            <path d="M-5.5 -4.6A7.2 7.2 0 0 1 6-4C3-5 1-2-1-2S-3-5-5.5-4.6Z" fill="#b9d3fd" />
          </g>
          <text x="2216" y="42.7" textLength="318" lengthAdjust="spacingAndGlyphs" font-family="Lato, sans-serif" font-size="28" fill="#202124" stroke="#202124" stroke-width=".5">Google Earth Engine Apps</text>
        </svg>
      </header>
      <div class="main">
        <aside class="left">
          <div class="top"><gee-button class="menu" label="MENU" select></gee-button><div class="title">अत्यधिक वर्षा निगरानी प्रणाली</div></div>
          <div class="intro">${lines([
            [485, "अत्यधिक वर्षा निगरानी प्रणाली, अंग्रेजीमा Extreme Rainfall Monitoring"],
            [508, "System(ERMS), एक प्रयोगात्मक (Experimental) उपकरण हो जसले चयन"],
            [487, "गरिएको मितिदेखि ३ दिन अगाडि सम्मको पूर्वानुमान( GFS) र गएको ३ दिन"],
            [491, "सम्मको वास्तविक परिवेश (IMERG)का आधारमा अत्यधिक वर्षा हुने/भएको"],
            [485, "अनुमानित स्थान र त्यसका सम्भावित/भएको प्रभावहरूको जानकारी दिन्छ।"],
          ])}</div>
          <div class="rule">${rule}</div>
          <div class="section">IMERG वास्तविक परिवेश</div>
          <div class="prompt">${lines([[490, PROMPT]])}</div>
          <div class="rule r2">${rule}</div>
          <div class="note red">${lines([
            [532, "GFS पूर्वानुमान र IMERG वास्तविक परिवेशका आधारमा प्यानलमा प्रभावित"],
            [525, "जनसंख्या, खेतीयोग्य जमिन, भवन, खानेपानी र शौचालय संख्या देखिएपछि"],
            [494, "गणना समाप्त भएको बुझ्न सकिन्छ। हरेक गणनाले सबै प्रक्रिया पूरा गर्न"],
            [332, "कम्तिमा १-२ मिनेट लाग्छ। कृपया धैर्य गर्नुहोस्!\""],
          ])}</div>
        </aside>
        <main class="mapwrap">
          <nepal-map></nepal-map>
          <div class="card zoom"><svg width="35" height="71" viewBox="0 0 35 71"><path d="M12.500 18.500h10M17.500 13.500v10M12.500 54.500h10" stroke="#666" stroke-width="1.600" /><path d="M6 35.500h26" stroke="#e2e2e2" /></svg></div>
          <div class="card layers">Layers</div>
          <div class="card types"><div>Map</div><div>Satellite</div><div class="on">Grey</div></div>
          <div class="card full"><svg width="35" height="35" viewBox="0 0 35 35"><path d="M7.500 13V7.500H13M22 7.500h5.500V13M27.500 22v5.500H22M13 27.500H7.500V22" fill="none" stroke="#666" stroke-width="2.600" /></svg></div>
          <div class="card slider">
            <div class="days"><span>28</span><span>29</span><span>30</span><span class="month">Jul</span>${[2, 3, 4, 5, 6, 7, 8, 9].map((n) => html`<span>${n}</span>`)}</div>
            <div class="track"><div class="knob"><i></i><i></i><i></i></div></div>
            <div class="steps">
              <div class="step"><svg width="12" height="12" viewBox="0 0 12 12"><path d="M11 0v12L1 6z" fill="#444" /></svg></div>
              <div class="step off"><svg width="12" height="12" viewBox="0 0 12 12"><path d="M1 0v12L11 6z" fill="#b5b5b5" /></svg></div>
            </div>
            <div class="date">Jul 9, 2025</div>
            <div class="input"><span>07/09/2025</span><svg width="14" height="15" viewBox="0 0 14 15"><path d="M1 2.500h12v11.500H1zM1 3.500h12M3.500 0v3M10.500 0v3" fill="none" stroke="#000" stroke-width="1.800" /></svg></div>
          </div>
          <div class="card bar">
            <gee-button class="w1" label="Select number of days" select></gee-button>
            <gee-button class="w2" label="Select Threshold" select></gee-button>
            <gee-button class="w3" label="Select Method" select></gee-button>
            <gee-button class="w4" label="Render"></gee-button>
          </div>
          <svg class="google" width="80" height="24" viewBox="0 0 80 24"><text x="3" y="21" textLength="71" lengthAdjust="spacingAndGlyphs" font-family="Lato, sans-serif" font-weight="700" font-size="23" fill="#fff" stroke="#a2a2a2" stroke-width="2.600" paint-order="stroke">Google</text></svg>
          <div class="card pan"><svg width="35" height="35" viewBox="0 0 35 35"><path d="M14 11.500 17.500 8 21 11.500M14 23.500 17.500 27 21 23.500M11.500 14 8 17.500 11.500 21M23.500 14 27 17.500 23.500 21" fill="none" stroke="#666" stroke-width="2.200" /></svg></div>
          <div class="credits"><span>Keyboard shortcuts</span><span>Map data ©2025 Google</span><span>20 km</span><span>Terms</span></div>
        </main>
        <aside class="right">
          <div class="section" style="margin-top:0">संकेत</div>
          <div class="legend">
            <legend-group class="col1" heading="वर्षा" .items=${RAIN}></legend-group>
            <div class="col2">
              <legend-group heading="वर्षा श्रेणी" .items=${CLASSES}></legend-group>
              <legend-group heading="सम्भाव्यता" .items=${CHANCE}></legend-group>
              <legend-group heading="बाढी चेतावनी" .items=${FLOOD}></legend-group>
            </div>
          </div>
          <div class="rule" style="margin-top:21px">${rule}</div>
          <div class="section">GFS पूर्वानुमान</div>
          <div class="prompt">${lines([[491, PROMPT]])}</div>
          <div class="rule r2">${rule}</div>
          <div class="note" style="margin-top:9px">${lines([
            [517, "यो APP© पूर्वानुमानमा आधारित अग्रिम कार्य (FbAA) परियोजनाका लागि"],
            [475, "नेपालमा निर्मित गरिएको हो । कुनै प्रश्न/जिज्ञासाहरूको लागि सम्पर्क"],
            [303, "गर्नुहोस्: dristiproject.2024@gmail.com"],
          ])}</div>
          <div class="note red" style="margin-top:6px">${lines([
            [444, "सावधान: यो एक प्रयोगशील (Experimental) उपकरण हो भनेर"],
            [211, "सावधानीपूर्वक प्रयोग गर्नुपर्छ।"],
          ])}</div>
        </aside>
      </div>
    `;
  }
}
